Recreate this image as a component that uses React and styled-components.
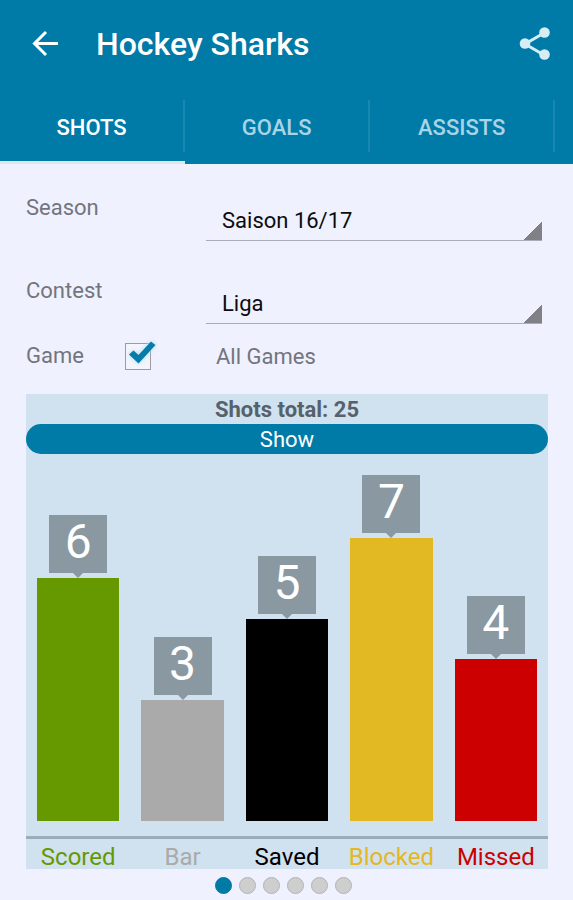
import React, { useState } from 'react';
import styled, { createGlobalStyle } from 'styled-components';

const GlobalStyle = createGlobalStyle`
  * {
    box-sizing: border-box;
  }

  body {
    margin: 0;
    background: #eff1fe;
    color: #73757c;
    font-family: Roboto, 'Liberation Sans', sans-serif;
    font-size: 22px;
  }

  button,
  select {
    font: inherit;
    border: none;
  }
`;

const Header = styled.header`
  background: #007aa7;
  color: white;
`;

const Toolbar = styled.div`
  display: flex;
  align-items: center;
  height: 90px;
  padding: 0 20px 2px 30px;
`;

const IconButton = styled.button`
  display: flex;
  padding: 0;
  background: none;
  color: ${props => props.$color || 'white'};
`;

const Title = styled.h1`
  flex: 1;
  margin: 0 0 0 36px;
  font-size: 32px;
  font-weight: 500;
`;

const Tabs = styled.nav`
  display: flex;
  height: 74px;
  overflow: hidden;
`;

const Tab = styled.button`
  display: flex;
  flex: 0 0 32.3%;
  padding: 10px 0 9px;
  background: none;
  border-bottom: 3px solid ${props => (props.$active ? '#e0e5e8' : 'transparent')};
  color: ${props => (props.$active ? 'white' : '#a9d4e6')};
  font-size: 22px;
  font-weight: 500;
`;

const TabText = styled.span`
  flex: 1;
  height: 52px;
  line-height: 56px;
  text-align: center;
  border-right: 2px solid #1a87b0;
`;

const Content = styled.main`
  padding: 24px 25px 0 26px;
`;

const Field = styled.div`
  display: grid;
  grid-template-columns: 180px 1fr;
  align-items: start;
  margin: 0 6px 30px 0;
`;

const Label = styled.label`
  line-height: 40px;
`;

const Select = styled.select`
  appearance: none;
  width: 100%;
  height: 53px;
  padding: 12px 24px 0 16px;
  border-bottom: 1px solid #a9abb5;
  border-radius: 0;
  color: #0c0c0e;
  background: linear-gradient(135deg, transparent 50%, #7f8187 50%) right bottom / 19px 19px no-repeat;
`;

const GameRow = styled.div`
  display: grid;
  grid-template-columns: 98px 92px 1fr;
  align-items: center;
  height: 40px;
  margin: -18px 0 18px;
`;

const CheckWrap = styled.span`
  position: relative;
  display: flex;
  width: 28px;
  height: 28px;
`;

const Checkbox = styled.input`
  appearance: none;
  width: 27px;
  height: 27px;
  margin: 1px;
  border: 1px solid #9a9ca4;
  background: #f4f5fc;
`;

const CheckMark = styled.svg`
  position: absolute;
  left: 0;
  top: -4px;
  pointer-events: none;
  filter: drop-shadow(0 0 2px #9fdcf0);
`;

const Chart = styled.section`
  background: #d0e1ef;
`;

const ChartTitle = styled.h2`
  margin: 0;
  padding-top: 2px;
  color: #56616a;
  font-size: 22px;
  font-weight: 700;
  line-height: 28px;
  text-align: center;
`;

const ShowButton = styled.button`
  display: block;
  width: 100%;
  height: 30px;
  padding: 2px 0 0;
  border-radius: 15px;
  background: #007aa7;
  color: white;
  line-height: 28px;
`;

const Plot = styled.div`
  display: grid;
  grid-template-columns: repeat(5, 1fr);
  align-items: end;
  height: 385px;
  padding: 84px 0 15px;
  border-bottom: 3px solid #9aadba;
`;

const Bar = styled.div`
  position: relative;
  margin: 0 11px;
  background: ${props => props.$color};
`;

const ValueTag = styled.span`
  position: absolute;
  left: 50%;
  bottom: calc(100% + 5px);
  width: 58px;
  height: 58px;
  margin-left: -29px;
  background: #8998a1;
  color: white;
  font-size: 48px;
  line-height: 54px;
  text-align: center;

  &::after {
    content: '';
    position: absolute;
    left: 24px;
    top: 100%;
    border: 5px solid transparent;
    border-top-color: #8998a1;
    border-bottom: none;
  }
`;

const Names = styled.div`
  display: grid;
  grid-template-columns: repeat(5, 1fr);
  padding-top: 6px;
  font-size: 24px;
  line-height: 24px;
  text-align: center;
`;

const Name = styled.span`
  color: ${props => props.$color};
`;

const Dots = styled.div`
  display: flex;
  justify-content: center;
  margin-top: 8px;
`;

const Dot = styled.button`
  width: 17px;
  height: 17px;
  margin-right: 7px;
  padding: 0;
  border: 1px solid ${props => (props.$active ? '#007aa7' : '#b3b3b5')};
  border-radius: 50%;
  background: ${props => (props.$active ? '#007aa7' : '#cecece')};
`;

const tabs = ['SHOTS', 'GOALS', 'ASSISTS', ''];

const shots = [
  { name: 'Scored', value: 6, color: '#669900' },
  { name: 'Bar', value: 3, color: '#aaaaaa' },
  { name: 'Saved', value: 5, color: '#000000' },
  { name: 'Blocked', value: 7, color: '#e2b823' },
  { name: 'Missed', value: 4, color: '#cc0000' },
];

const total = shots.reduce((sum, shot) => sum + shot.value, 0);
const highest = Math.max(...shots.map(shot => shot.value));

function App() {
  const [tab, setTab] = useState(0);
  const [page, setPage] = useState(0);
  const [allGames, setAllGames] = useState(true);

  return (
    <>
      <GlobalStyle />
      <Header>
        <Toolbar>
          <IconButton aria-label="Back">
            <svg width="30" height="30" viewBox="0 0 30 30" fill="none" stroke="currentColor" strokeWidth="3">
              <path d="M28 14.500H5M16 3L4.500 14.500L16 26" />
            </svg>
          </IconButton>
          <Title>Hockey Sharks</Title>
          <IconButton aria-label="Share" $color="#d6edf5">
            <svg width="34" height="34" viewBox="0 0 34 34" fill="currentColor">
              <path d="M25 6L6 17L25 28" fill="none" stroke="currentColor" strokeWidth="3" />
              <circle cx="25.500" cy="5.500" r="5.300" />
              <circle cx="6" cy="16.500" r="5.300" />
              <circle cx="25.500" cy="27.500" r="5.300" />
            </svg>
          </IconButton>
        </Toolbar>
        <Tabs>
          {tabs.map((text, idx) => (
            <Tab key={idx} $active={idx === tab} onClick={() => setTab(idx)}>
              <TabText>{text}</TabText>
            </Tab>
          ))}
        </Tabs>
      </Header>

      <Content>
        <Field>
          <Label htmlFor="season">Season</Label>
          <Select id="season">
            <option>Saison 16/17</option>
          </Select>
        </Field>
        <Field>
          <Label htmlFor="contest">Contest</Label>
          <Select id="contest">
            <option>Liga</option>
          </Select>
        </Field>
        <GameRow>
          <Label htmlFor="game">Game</Label>
          <CheckWrap>
            <Checkbox
              id="game"
              type="checkbox"
              checked={allGames}
              onChange={e => setAllGames(e.target.checked)}
            />
            {allGames && (
              <CheckMark width="34" height="32" viewBox="0 0 34 32">
                <path d="M5 16.500L9.500 12.500L14.500 17L27 3.500L31.500 7L14.500 25.500Z" fill="#087ca8" />
              </CheckMark>
            )}
          </CheckWrap>
          <span>All Games</span>
        </GameRow>

        <Chart>
          <ChartTitle>Shots total: {total}</ChartTitle>
          <ShowButton>Show</ShowButton>
          <Plot>
            {shots.map(shot => (
              <Bar key={shot.name} $color={shot.color} style={{ height: `${(shot.value / highest) * 100}%` }}>
                <ValueTag>{shot.value}</ValueTag>
              </Bar>
            ))}
          </Plot>
          <Names>
            {shots.map(shot => (
              <Name key={shot.name} $color={shot.color}>{shot.name}</Name>
            ))}
          </Names>
        </Chart>

        <Dots>
          {[0, 1, 2, 3, 4, 5].map(idx => (
            <Dot key={idx} aria-label={`Page ${idx + 1}`} $active={idx === page} onClick={() => setPage(idx)} />
          ))}
        </Dots>
      </Content>
    </>
  );
}

export default App;
